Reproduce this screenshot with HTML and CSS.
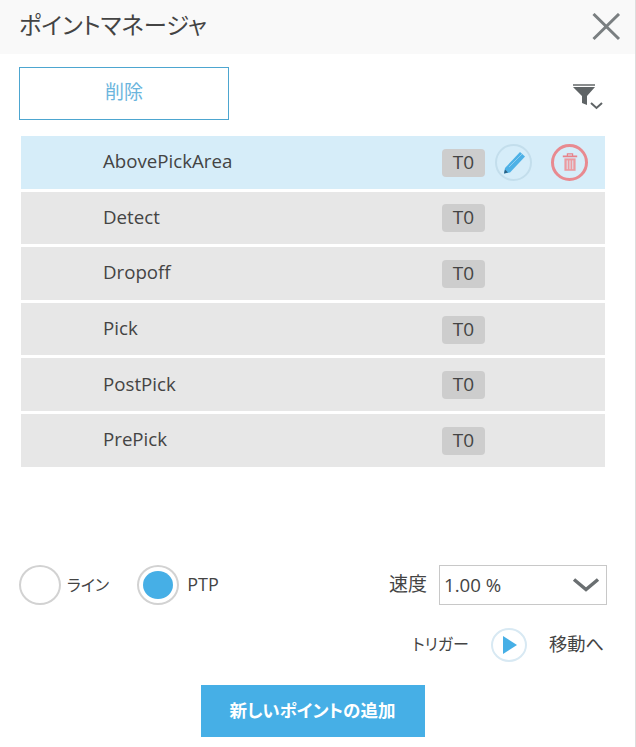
FILE: index.html
```html
<!DOCTYPE html>
<html lang="ja">
<head>
  <meta charset="UTF-8">
  <title>ポイントマネージャ</title>
  <link rel="stylesheet" href="styles.css">
</head>
<body>
  <div class="panel">
    <div class="header">
      <h1>ポイントマネージャ</h1>
      <svg class="close" width="30" height="28" viewBox="0 0 30 28"><path d="M2.500 1 L28 26 M28 1 L2.500 26" stroke="#7a7f81" stroke-width="3" fill="none"/></svg>
    </div>

    <div class="toolbar">
      <button class="delete-btn"><span>削除</span></button>
      <svg class="filter" width="36" height="30" viewBox="0 0 36 30">
        <path d="M1 2 H23 V4 H1 Z" fill="#8a8d8e"/>
        <path d="M1 5 H23 L15 14 V23 L10 21 V14 Z" fill="#5f6466"/>
        <path d="M19 21 L24.500 26 L30 21" stroke="#5f6466" stroke-width="2" fill="none"/>
      </svg>
    </div>

    <div class="points">
      <div class="point selected">
        <span class="name">AbovePickArea</span>
        <span class="tool">T0</span>
        <span class="round edit">
          <svg width="28" height="28" viewBox="0 0 28 28">
            <path d="M5 20 L20 4 L25 8.500 L10 24.500 L4 25.500 Z" fill="#4db1e6"/>
            <path d="M9 19 L22 6" stroke="#8ccdf0" stroke-width="1"/>
            <path d="M4 25.500 L5 21.500 L8 24.500 Z" fill="#2d5f80"/>
          </svg>
        </span>
        <span class="round trash">
          <svg width="20" height="24" viewBox="0 0 20 24">
            <path d="M1 4 H19 V6 H1 Z M6 1 H14 V4 H12.500 V2.500 H7.500 V4 H6 Z" fill="#e8828a"/>
            <path d="M3 7.500 H17 V23 H3 Z" fill="#eb9aa0"/>
            <path d="M6.500 10 V21 M10 10 V21 M13.500 10 V21" stroke="#d9ecf6" stroke-width="1.200"/>
          </svg>
        </span>
      </div>
      <div class="point"><span class="name">Detect</span><span class="tool">T0</span></div>
      <div class="point"><span class="name">Dropoff</span><span class="tool">T0</span></div>
      <div class="point"><span class="name">Pick</span><span class="tool">T0</span></div>
      <div class="point"><span class="name">PostPick</span><span class="tool">T0</span></div>
      <div class="point"><span class="name">PrePick</span><span class="tool">T0</span></div>
    </div>

    <div class="options">
      <div class="radio-item">
        <span class="radio"></span>
        <span class="line-label">ライン</span>
      </div>
      <div class="radio-item">
        <span class="radio checked"></span>
        <span class="ptp-label">PTP</span>
      </div>
      <div class="speed">
        <span class="speed-label">速度</span>
        <div class="select">
          <span>1.00 %</span>
          <svg width="28" height="16" viewBox="0 0 28 16"><path d="M2 2.500 L14 12.500 L26 2.500" stroke="#6a6f71" stroke-width="3.500" fill="none"/></svg>
        </div>
      </div>
    </div>

    <div class="trigger">
      <span class="trigger-label">トリガー</span>
      <span class="play">
        <svg width="16" height="20" viewBox="0 0 16 20"><path d="M1 1 L15 10 L1 19 Z" fill="#46afe6"/></svg>
      </span>
      <span>移動へ</span>
    </div>

    <div class="footer">
      <button class="add-btn">新しいポイントの追加</button>
    </div>
  </div>
</body>
</html>
```

FILE: styles.css
```css
body {
  margin: 0;
  background: #fff;
  color: #444;
  font-family: "Open Sans", "Noto Sans CJK JP", sans-serif;
  font-size: 18px;
  font-feature-settings: "palt";
}

.panel {
  width: 635px;
  height: 747px;
  border-right: 1px solid #ddd;
}

.header {
  display: flex;
  align-items: center;
  justify-content: space-between;
  height: 54px;
  padding: 0 14px 0 19px;
  background-color: #f9f9f9;
}

.header h1 {
  margin: 0 0 7px;
  font-size: 23.300px;
  font-weight: 400;
  color: #444;
}

.toolbar {
  display: flex;
  align-items: center;
  justify-content: space-between;
  margin-top: 13px;
  padding: 0 27px 0 19px;
}

.delete-btn {
  width: 210px;
  height: 53px;
  padding: 0 0 5px;
  border: 1px solid #4da6d0;
  background: #fff;
  color: #6bb5dd;
  font-family: inherit;
  font-feature-settings: inherit;
  font-size: 19px;
}

.filter {
  margin-top: 6px;
}

.points {
  display: flex;
  flex-direction: column;
  gap: 3px;
  margin: 16px 30px 0 21px;
}

.point {
  display: flex;
  align-items: center;
  height: 52.600px;
  padding-left: 82px;
  background-color: #e7e7e7;
}

.point.selected {
  background-color: #d6edf9;
}

.name {
  width: 339px;
  margin-top: -3px;
  font-size: 18.700px;
}

.tool {
  width: 43px;
  height: 28px;
  margin-top: 1px;
  border-radius: 4px;
  background-color: #cdcdcd;
  text-align: center;
  line-height: 26px;
  font-size: 19px;
}

.round {
  display: flex;
  align-items: center;
  justify-content: center;
  box-sizing: border-box;
  width: 37px;
  height: 37px;
  border-radius: 50%;
}

.edit {
  margin-left: 10px;
  border: 2px solid #c3deec;
}

.trash {
  margin-left: 19px;
  border: 3px solid #e88a90;
}

.trash svg {
  width: 16px;
  height: 20px;
}

.options {
  display: flex;
  align-items: center;
  margin-top: 98px;
  padding-left: 19px;
}

.radio-item {
  display: flex;
  align-items: center;
  gap: 6px;
  margin-right: 28px;
}

.line-label {
  font-size: 16px;
  margin-top: -2px;
}

.ptp-label {
  margin-left: 2px;
  margin-top: -2px;
}

.radio {
  box-sizing: border-box;
  width: 42px;
  height: 40px;
  border: 2px solid #d2d2d2;
  border-radius: 50%;
  background: #fff;
}

.radio.checked {
  background: #46afe6;
  background-clip: content-box;
  padding: 4px;
}

.speed {
  display: flex;
  align-items: center;
  gap: 12px;
  margin-left: auto;
  margin-right: 28px;
}

.speed-label {
  font-size: 19px;
  margin-top: -3px;
}

.select {
  display: flex;
  align-items: center;
  justify-content: space-between;
  box-sizing: border-box;
  width: 168px;
  height: 40px;
  padding: 0 6px 0 4px;
  border: 1px solid #c8c8c8;
  font-size: 18.700px;
}

.trigger {
  display: flex;
  align-items: center;
  justify-content: flex-end;
  margin-top: 23px;
  padding-right: 31px;
  font-size: 18.300px;
}

.trigger-label {
  font-size: 16px;
  margin-top: -3px;
}

.trigger > span:last-child {
  margin-top: -3px;
}

.play {
  display: flex;
  align-items: center;
  justify-content: center;
  box-sizing: border-box;
  width: 36px;
  height: 34px;
  margin: 0 22px;
  padding-left: 3px;
  border: 2px solid #d8e9f3;
  border-radius: 50%;
}

.footer {
  display: flex;
  justify-content: center;
  margin-top: 23px;
}

.add-btn {
  width: 224px;
  height: 52px;
  margin-right: 10px;
  padding: 0 0 3px;
  border: none;
  background-color: #46afe6;
  color: #fff;
  font-family: inherit;
  font-feature-settings: inherit;
  font-size: 17.500px;
  font-weight: 700;
}
```
